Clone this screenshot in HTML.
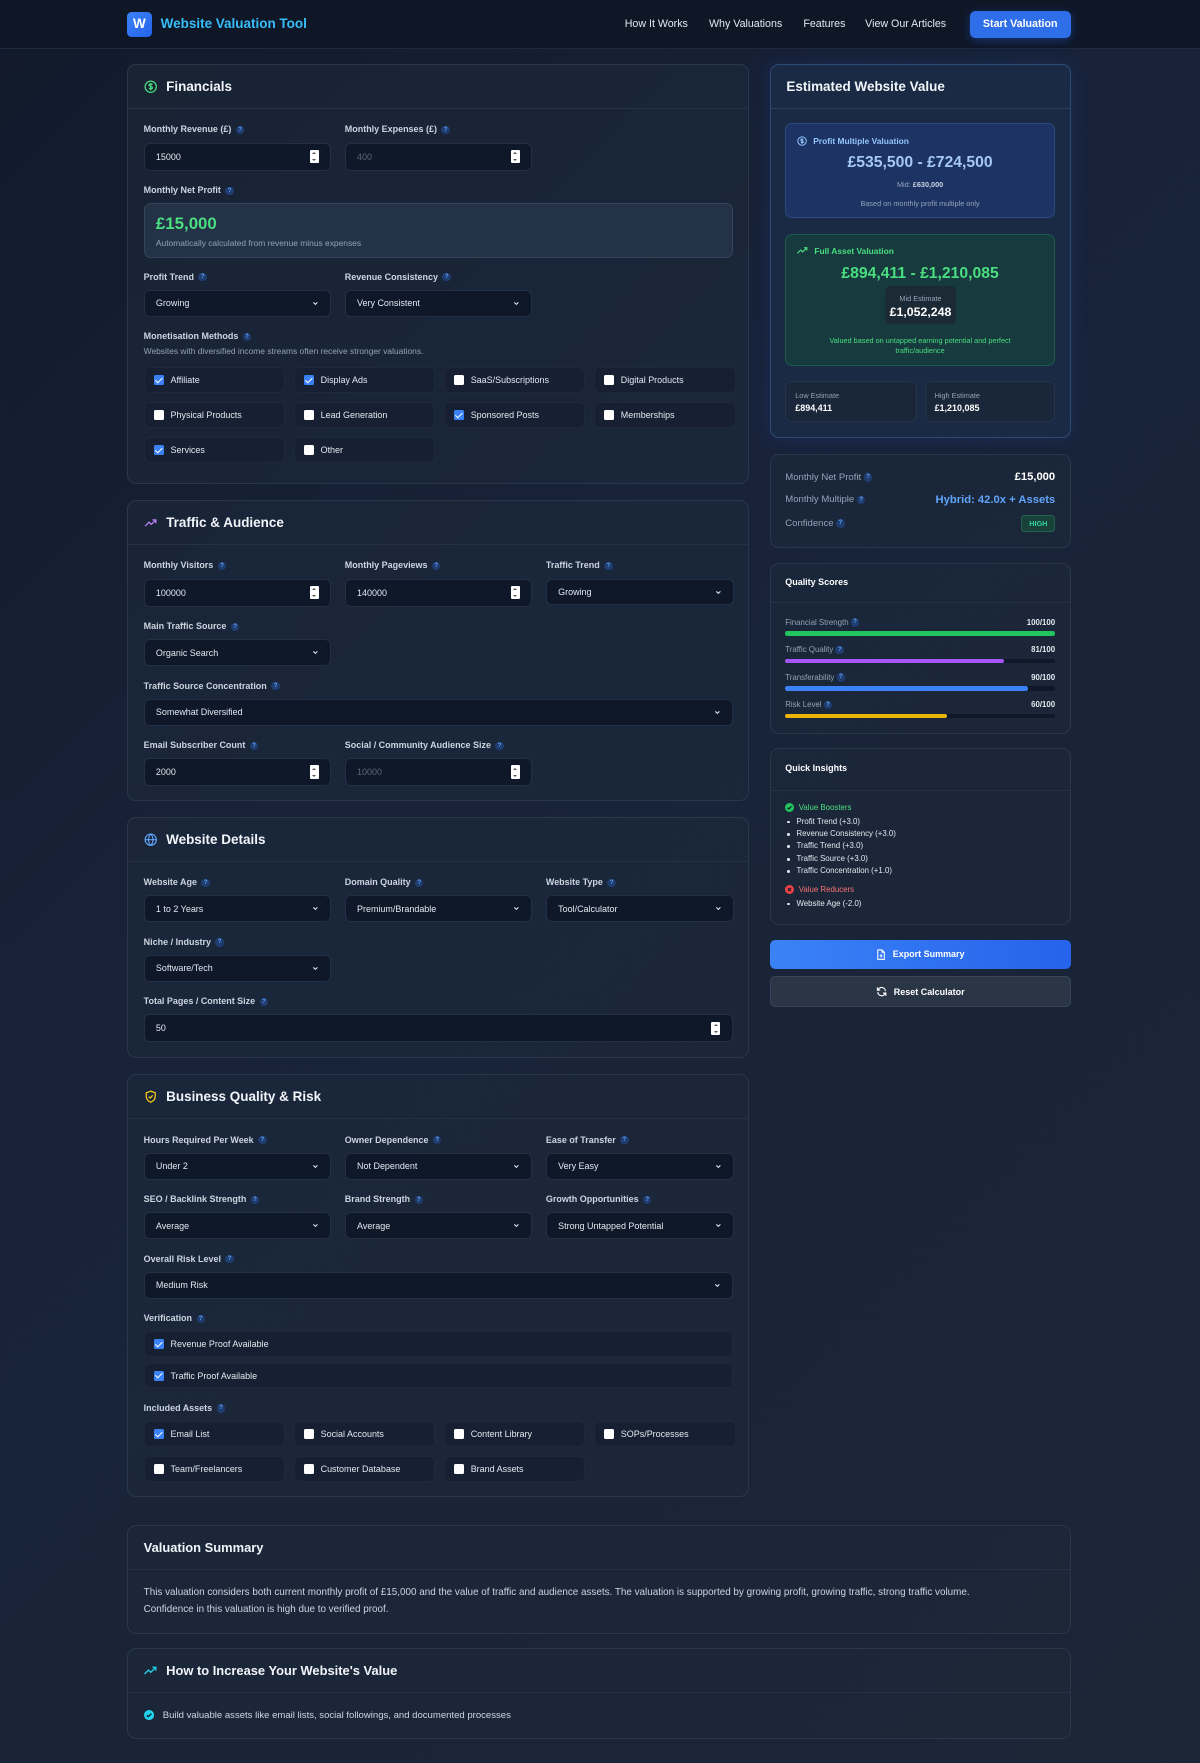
<!DOCTYPE html>
<html><head><meta charset="utf-8">
<style>
*{box-sizing:border-box;margin:0;padding:0}
html,body{width:1200px;height:1763px;overflow:hidden}
body{background:linear-gradient(135deg,#111a2b 0%,#18233a 40%,#1b2637 100%);font-family:"Liberation Sans",sans-serif;color:#e2e8f0}
#z{zoom:1.12360;width:1068px;height:1570px;position:relative}
.hdr{height:44px;background:#0f1727;border-bottom:1px solid #1f2a3c;position:relative}
.logo{position:absolute;left:113px;top:11px;width:22px;height:22px;border-radius:4px;background:linear-gradient(135deg,#3b82f6,#2563eb);color:#fff;font-weight:bold;font-size:12px;text-align:center;line-height:22px}
.brand{position:absolute;left:143px;top:14px;font-size:12px;font-weight:bold;color:#38bdf8}
.nav{position:absolute;top:16px;font-size:9.5px;color:#e2e8f0}
.sbtn{position:absolute;left:863px;top:10px;width:90px;height:24px;border-radius:5px;background:#2e6ee8;color:#fff;font-size:9.5px;font-weight:bold;text-align:center;line-height:24px;box-shadow:0 2px 8px rgba(37,99,235,.4)}
.card{position:absolute;background:rgba(30,41,59,.55);border:1px solid #2a374b;border-radius:8px}
.ch{height:39px;display:flex;align-items:center;padding:0 14px;border-bottom:1px solid #253246;font-size:12px;font-weight:bold;color:#f1f5f9;gap:8px}
.cb{padding:13px 14px}
.lbl{height:17px;line-height:12px;font-size:8px;font-weight:bold;color:#cbd5e1;display:flex;align-items:flex-start;gap:4px}
.lbl .q{margin-top:2.2px}
.q{display:inline-block;width:7.5px;height:7.5px;border-radius:50%;background:#1f3d70;color:#60a5fa;font-size:5.5px;line-height:7.5px;text-align:center;font-weight:bold;vertical-align:middle}
.inp{height:25px;background:#0f1829;border:1px solid #223046;border-radius:5px;font-size:8px;color:#e2e8f0;display:flex;align-items:center;justify-content:space-between;padding:0 10px}
.inp.ph{color:#5b6577}
.sp{width:8px;height:12px;background:#fff;border-radius:1px;position:relative}
.sp:before,.sp:after{content:"";position:absolute;left:2px;border-left:2px solid transparent;border-right:2px solid transparent}
.sp:before{top:2px;border-bottom:2.5px solid #555}
.sp:after{bottom:2px;border-top:2.5px solid #555}
.sel{height:24px}
.chev{width:6px;height:6px}
.row{margin-bottom:12px}
.g3{display:grid;grid-template-columns:167px 167px 167px;column-gap:12px}
.g4{display:grid;grid-template-columns:repeat(4,126px);column-gap:7.6px;row-gap:8px}
.ck{height:23px;background:#162032;border:1px solid #1e2a3c;border-radius:5px;display:flex;align-items:center;padding-left:8px;font-size:8px;color:#e2e8f0;gap:6px}
.bx{width:9px;height:9px;background:#fff;border-radius:1.5px;position:relative;flex:none}
.bx.on{background:#3b82f6}
.bx.on:after{content:"";position:absolute;left:2.8px;top:.8px;width:2.5px;height:5px;border:solid #fff;border-width:0 1.4px 1.4px 0;transform:rotate(45deg)}
.rb{position:absolute;border-radius:6px}
.c{text-align:center}
.bar{height:4px;background:#0f1829;border-radius:2px;margin-top:3px;margin-bottom:7.5px}
.bar i{display:block;height:4px;border-radius:2px}
.ql{display:flex;justify-content:space-between;font-size:7px;color:#94a3b8;height:10px;align-items:center}
.ql b{color:#e2e8f0;font-size:7px}
ul{list-style:none}
li{font-size:7px;color:#e2e8f0;height:11px;line-height:11px;padding-left:10px;position:relative}
li:before{content:"";position:absolute;left:2px;top:4.5px;width:2.5px;height:2.5px;border-radius:50%;background:#e2e8f0}
</style></head><body><div id="z">

<div class="hdr">
<div class="logo">W</div><div class="brand">Website Valuation Tool</div>
<div class="nav" style="left:556px">How It Works</div>
<div class="nav" style="left:631px">Why Valuations</div>
<div class="nav" style="left:715px">Features</div>
<div class="nav" style="left:770px">View Our Articles</div>
<div class="sbtn">Start Valuation</div>
</div>

<!-- FINANCIALS -->
<div class="card" style="left:113px;top:57px;width:554px;height:374px">
<div class="ch"><svg width="12" height="12" viewBox="0 0 24 24" fill="none" stroke="#4ade80" stroke-width="2.2"><circle cx="12" cy="12" r="10"/><path d="M15 8.5c-.5-1-1.6-1.5-3-1.5-1.8 0-3 .9-3 2.2 0 3 6 1.5 6 4.6 0 1.3-1.3 2.2-3 2.2-1.5 0-2.6-.6-3.1-1.6M12 5.5v13"/></svg>Financials</div>
<div class="cb">
<div class="g3 row">
<div><div class="lbl">Monthly Revenue (£) <span class="q">?</span></div><div class="inp">15000<span class="sp"></span></div></div>
<div><div class="lbl">Monthly Expenses (£) <span class="q">?</span></div><div class="inp ph">400<span class="sp"></span></div></div>
</div>
<div class="lbl">Monthly Net Profit <span class="q">?</span></div>
<div style="height:49px;background:#243247;border:1px solid #34445c;border-radius:6px;padding:9px 10px;margin-bottom:11px">
<div style="font-size:15px;font-weight:bold;color:#4ade80;line-height:18px">£15,000</div>
<div style="font-size:7.5px;color:#94a3b8;margin-top:3px">Automatically calculated from revenue minus expenses</div></div>
<div class="g3 row">
<div><div class="lbl">Profit Trend <span class="q">?</span></div><div class="inp sel">Growing<svg class="chev" viewBox="0 0 10 10"><path d="M2 3.5l3 3 3-3" stroke="#e2e8f0" stroke-width="1.6" fill="none"/></svg></div></div>
<div><div class="lbl">Revenue Consistency <span class="q">?</span></div><div class="inp sel">Very Consistent<svg class="chev" viewBox="0 0 10 10"><path d="M2 3.5l3 3 3-3" stroke="#e2e8f0" stroke-width="1.6" fill="none"/></svg></div></div>
</div>
<div class="lbl" style="height:14px">Monetisation Methods <span class="q">?</span></div>
<div style="font-size:7.5px;color:#94a3b8;height:19px">Websites with diversified income streams often receive stronger valuations.</div>
<div class="g4">
<div class="ck"><span class="bx on"></span>Affiliate</div><div class="ck"><span class="bx on"></span>Display Ads</div><div class="ck"><span class="bx"></span>SaaS/Subscriptions</div><div class="ck"><span class="bx"></span>Digital Products</div>
<div class="ck"><span class="bx"></span>Physical Products</div><div class="ck"><span class="bx"></span>Lead Generation</div><div class="ck"><span class="bx on"></span>Sponsored Posts</div><div class="ck"><span class="bx"></span>Memberships</div>
<div class="ck"><span class="bx on"></span>Services</div><div class="ck"><span class="bx"></span>Other</div>
</div>
</div></div>

<!-- TRAFFIC -->
<div class="card" style="left:113px;top:445px;width:554px;height:268px">
<div class="ch"><svg width="12" height="12" viewBox="0 0 24 24" fill="none" stroke="#c084fc" stroke-width="2.2"><path d="M2 18l7-7 4 4 8-8M15 7h6v6"/></svg>Traffic &amp; Audience</div>
<div class="cb">
<div class="g3 row">
<div><div class="lbl">Monthly Visitors <span class="q">?</span></div><div class="inp">100000<span class="sp"></span></div></div>
<div><div class="lbl">Monthly Pageviews <span class="q">?</span></div><div class="inp">140000<span class="sp"></span></div></div>
<div><div class="lbl">Traffic Trend <span class="q">?</span></div><div class="inp sel">Growing<svg class="chev" viewBox="0 0 10 10"><path d="M2 3.5l3 3 3-3" stroke="#e2e8f0" stroke-width="1.6" fill="none"/></svg></div></div>
</div>
<div class="g3 row">
<div><div class="lbl">Main Traffic Source <span class="q">?</span></div><div class="inp sel">Organic Search<svg class="chev" viewBox="0 0 10 10"><path d="M2 3.5l3 3 3-3" stroke="#e2e8f0" stroke-width="1.6" fill="none"/></svg></div></div>
</div>
<div class="row"><div class="lbl">Traffic Source Concentration <span class="q">?</span></div><div class="inp sel">Somewhat Diversified<svg class="chev" viewBox="0 0 10 10"><path d="M2 3.5l3 3 3-3" stroke="#e2e8f0" stroke-width="1.6" fill="none"/></svg></div></div>
<div class="g3">
<div><div class="lbl">Email Subscriber Count <span class="q">?</span></div><div class="inp">2000<span class="sp"></span></div></div>
<div><div class="lbl">Social / Community Audience Size <span class="q">?</span></div><div class="inp ph">10000<span class="sp"></span></div></div>
</div>
</div></div>

<!-- DETAILS -->
<div class="card" style="left:113px;top:727px;width:554px;height:215px">
<div class="ch"><svg width="12" height="12" viewBox="0 0 24 24" fill="none" stroke="#60a5fa" stroke-width="2"><circle cx="12" cy="12" r="10"/><path d="M2 12h20M12 2c3 3 4 6.5 4 10s-1 7-4 10c-3-3-4-6.5-4-10s1-7 4-10z"/></svg>Website Details</div>
<div class="cb">
<div class="g3 row">
<div><div class="lbl">Website Age <span class="q">?</span></div><div class="inp sel">1 to 2 Years<svg class="chev" viewBox="0 0 10 10"><path d="M2 3.5l3 3 3-3" stroke="#e2e8f0" stroke-width="1.6" fill="none"/></svg></div></div>
<div><div class="lbl">Domain Quality <span class="q">?</span></div><div class="inp sel">Premium/Brandable<svg class="chev" viewBox="0 0 10 10"><path d="M2 3.5l3 3 3-3" stroke="#e2e8f0" stroke-width="1.6" fill="none"/></svg></div></div>
<div><div class="lbl">Website Type <span class="q">?</span></div><div class="inp sel">Tool/Calculator<svg class="chev" viewBox="0 0 10 10"><path d="M2 3.5l3 3 3-3" stroke="#e2e8f0" stroke-width="1.6" fill="none"/></svg></div></div>
</div>
<div class="g3 row">
<div><div class="lbl">Niche / Industry <span class="q">?</span></div><div class="inp sel">Software/Tech<svg class="chev" viewBox="0 0 10 10"><path d="M2 3.5l3 3 3-3" stroke="#e2e8f0" stroke-width="1.6" fill="none"/></svg></div></div>
</div>
<div><div class="lbl">Total Pages / Content Size <span class="q">?</span></div><div class="inp">50<span class="sp"></span></div></div>
</div></div>

<!-- BUSINESS -->
<div class="card" style="left:113px;top:956px;width:554px;height:376px">
<div class="ch"><svg width="12" height="12" viewBox="0 0 24 24" fill="none" stroke="#facc15" stroke-width="2.2"><path d="M12 2l8 3v6c0 5-3.5 9-8 11-4.5-2-8-6-8-11V5z"/><path d="M8.5 12l2.5 2.5 4.5-5"/></svg>Business Quality &amp; Risk</div>
<div class="cb">
<div class="g3 row">
<div><div class="lbl">Hours Required Per Week <span class="q">?</span></div><div class="inp sel">Under 2<svg class="chev" viewBox="0 0 10 10"><path d="M2 3.5l3 3 3-3" stroke="#e2e8f0" stroke-width="1.6" fill="none"/></svg></div></div>
<div><div class="lbl">Owner Dependence <span class="q">?</span></div><div class="inp sel">Not Dependent<svg class="chev" viewBox="0 0 10 10"><path d="M2 3.5l3 3 3-3" stroke="#e2e8f0" stroke-width="1.6" fill="none"/></svg></div></div>
<div><div class="lbl">Ease of Transfer <span class="q">?</span></div><div class="inp sel">Very Easy<svg class="chev" viewBox="0 0 10 10"><path d="M2 3.5l3 3 3-3" stroke="#e2e8f0" stroke-width="1.6" fill="none"/></svg></div></div>
</div>
<div class="g3 row">
<div><div class="lbl">SEO / Backlink Strength <span class="q">?</span></div><div class="inp sel">Average<svg class="chev" viewBox="0 0 10 10"><path d="M2 3.5l3 3 3-3" stroke="#e2e8f0" stroke-width="1.6" fill="none"/></svg></div></div>
<div><div class="lbl">Brand Strength <span class="q">?</span></div><div class="inp sel">Average<svg class="chev" viewBox="0 0 10 10"><path d="M2 3.5l3 3 3-3" stroke="#e2e8f0" stroke-width="1.6" fill="none"/></svg></div></div>
<div><div class="lbl">Growth Opportunities <span class="q">?</span></div><div class="inp sel">Strong Untapped Potential<svg class="chev" viewBox="0 0 10 10"><path d="M2 3.5l3 3 3-3" stroke="#e2e8f0" stroke-width="1.6" fill="none"/></svg></div></div>
</div>
<div class="row"><div class="lbl">Overall Risk Level <span class="q">?</span></div><div class="inp sel">Medium Risk<svg class="chev" viewBox="0 0 10 10"><path d="M2 3.5l3 3 3-3" stroke="#e2e8f0" stroke-width="1.6" fill="none"/></svg></div></div>
<div class="lbl">Verification <span class="q">?</span></div>
<div class="ck" style="margin-bottom:5px"><span class="bx on"></span>Revenue Proof Available</div>
<div class="ck" style="margin-bottom:12px"><span class="bx on"></span>Traffic Proof Available</div>
<div class="lbl">Included Assets <span class="q">?</span></div>
<div class="g4">
<div class="ck"><span class="bx on"></span>Email List</div><div class="ck"><span class="bx"></span>Social Accounts</div><div class="ck"><span class="bx"></span>Content Library</div><div class="ck"><span class="bx"></span>SOPs/Processes</div>
<div class="ck"><span class="bx"></span>Team/Freelancers</div><div class="ck"><span class="bx"></span>Customer Database</div><div class="ck"><span class="bx"></span>Brand Assets</div>
</div>
</div></div>

<!-- RIGHT: ESTIMATE -->
<div class="card" style="left:685px;top:57px;width:268px;height:333px;background:#1a2a44;border-color:#2c4a78;box-shadow:0 0 16px rgba(37,99,235,.15)">
<div class="ch" style="border-color:#2a3f60">Estimated Website Value</div>
<div class="rb" style="left:13px;top:52px;width:240px;height:84px;background:#1d3363;border:1px solid #2b4a80">
<div style="position:absolute;left:10px;top:10px;font-size:7.5px;font-weight:bold;color:#93c5fd;display:flex;align-items:center;gap:5px"><svg width="9" height="9" viewBox="0 0 24 24" fill="none" stroke="#93c5fd" stroke-width="2.4"><circle cx="12" cy="12" r="10"/><path d="M15 8.5c-.5-1-1.6-1.5-3-1.5-1.8 0-3 .9-3 2.2 0 3 6 1.5 6 4.6 0 1.3-1.3 2.2-3 2.2-1.5 0-2.6-.6-3.1-1.6M12 5.5v13"/></svg>Profit Multiple Valuation</div>
<div class="c" style="position:absolute;left:0;right:0;top:26px;font-size:14px;font-weight:bold;color:#a5c8f5">£535,500 - £724,500</div>
<div class="c" style="position:absolute;left:0;right:0;top:49px;font-size:6.5px;color:#94a3b8">Mid: <b style="color:#cbd5e1">£630,000</b></div>
<div class="c" style="position:absolute;left:0;right:0;top:66px;font-size:6.5px;color:#94a3b8">Based on monthly profit multiple only</div>
</div>
<div class="rb" style="left:13px;top:150px;width:240px;height:118px;background:#163a3e;border:1px solid #1f5a48">
<div style="position:absolute;left:10px;top:10px;font-size:7.5px;font-weight:bold;color:#4ade80;display:flex;align-items:center;gap:5px"><svg width="10" height="8" viewBox="0 0 24 18" fill="none" stroke="#4ade80" stroke-width="2.4"><path d="M1 15l7-7 4 4 9-9M15 3h6v6"/></svg>Full Asset Valuation</div>
<div class="c" style="position:absolute;left:0;right:0;top:27px;font-size:14px;font-weight:bold;color:#4ade80">£894,411 - £1,210,085</div>
<div class="c" style="position:absolute;left:88px;top:46px;width:63px;height:34px;background:#1b2a35;border-radius:4px">
<div style="font-size:6.5px;color:#94a3b8;margin-top:7px">Mid Estimate</div>
<div style="font-size:11px;font-weight:bold;color:#fff;margin-top:2px">£1,052,248</div></div>
<div class="c" style="position:absolute;left:0;right:0;top:90px;font-size:6.5px;color:#4ade80;line-height:9.5px">Valued based on untapped earning potential and perfect<br>traffic/audience</div>
</div>
<div class="rb" style="left:13px;top:281px;width:117px;height:37px;background:#1a2639;border:1px solid #26344a">
<div style="position:absolute;left:8px;top:8px;font-size:6.5px;color:#94a3b8">Low Estimate</div>
<div style="position:absolute;left:8px;top:19px;font-size:8px;font-weight:bold;color:#fff">£894,411</div></div>
<div class="rb" style="left:137px;top:281px;width:116px;height:37px;background:#1a2639;border:1px solid #26344a">
<div style="position:absolute;left:8px;top:8px;font-size:6.5px;color:#94a3b8">High Estimate</div>
<div style="position:absolute;left:8px;top:19px;font-size:8px;font-weight:bold;color:#fff">£1,210,085</div></div>
</div>

<!-- STATS -->
<div class="card" style="left:685px;top:404px;width:268px;height:84px;padding:0 13px">
<div style="display:flex;justify-content:space-between;align-items:center;height:20px;margin-top:10px;font-size:8.5px;color:#94a3b8"><span>Monthly Net Profit <span class="q">?</span></span><b style="color:#fff;font-size:10px">£15,000</b></div>
<div style="display:flex;justify-content:space-between;align-items:center;height:20px;font-size:8.5px;color:#94a3b8"><span>Monthly Multiple <span class="q">?</span></span><b style="color:#60a5fa;font-size:10px">Hybrid: 42.0x + Assets</b></div>
<div style="display:flex;justify-content:space-between;align-items:center;height:22px;font-size:8.5px;color:#94a3b8"><span>Confidence <span class="q">?</span></span><b style="color:#34d399;font-size:6.5px;background:#184239;border:1px solid #22614c;border-radius:3px;padding:3px 6px">HIGH</b></div>
</div>

<!-- QUALITY -->
<div class="card" style="left:685px;top:501px;width:268px;height:152px">
<div style="height:35px;border-bottom:1px solid #253246;padding:12px 13px 0;font-size:8px;font-weight:bold;color:#fff">Quality Scores</div>
<div style="padding:12px 13px 0">
<div class="ql"><span>Financial Strength <span class="q">?</span></span><b>100/100</b></div><div class="bar"><i style="width:100%;background:#22c55e"></i></div>
<div class="ql"><span>Traffic Quality <span class="q">?</span></span><b>81/100</b></div><div class="bar"><i style="width:81%;background:#a855f7"></i></div>
<div class="ql"><span>Transferability <span class="q">?</span></span><b>90/100</b></div><div class="bar"><i style="width:90%;background:#3b82f6"></i></div>
<div class="ql"><span>Risk Level <span class="q">?</span></span><b>60/100</b></div><div class="bar"><i style="width:60%;background:#eab308"></i></div>
</div></div>

<!-- INSIGHTS -->
<div class="card" style="left:685px;top:666px;width:268px;height:157px">
<div style="height:37px;border-bottom:1px solid #253246;padding:12px 13px 0;font-size:8px;font-weight:bold;color:#fff">Quick Insights</div>
<div style="padding:9px 13px 0">
<div style="font-size:7px;color:#4ade80;display:flex;align-items:center;gap:4px;height:11px"><svg width="8" height="8" viewBox="0 0 10 10"><circle cx="5" cy="5" r="5" fill="#22c55e"/><path d="M2.8 5.2l1.5 1.4 3-3" stroke="#0f1829" stroke-width="1.3" fill="none"/></svg>Value Boosters</div>
<ul style="margin-top:2px"><li>Profit Trend (+3.0)</li><li>Revenue Consistency (+3.0)</li><li>Traffic Trend (+3.0)</li><li>Traffic Source (+3.0)</li><li>Traffic Concentration (+1.0)</li></ul>
<div style="font-size:7px;color:#f87171;display:flex;align-items:center;gap:4px;height:11px;margin-top:5px"><svg width="8" height="8" viewBox="0 0 10 10"><circle cx="5" cy="5" r="5" fill="#ef4444"/><path d="M3.3 3.3l3.4 3.4M6.7 3.3l-3.4 3.4" stroke="#0f1829" stroke-width="1.3"/></svg>Value Reducers</div>
<ul style="margin-top:2px"><li>Website Age (-2.0)</li></ul>
</div></div>

<div style="position:absolute;left:685px;top:837px;width:268px;height:25px;border-radius:5px;background:linear-gradient(90deg,#3b82f6,#2563eb);display:flex;align-items:center;justify-content:center;gap:6px;font-size:8px;font-weight:bold;color:#fff"><svg width="9" height="10" viewBox="0 0 20 24" fill="none" stroke="#fff" stroke-width="2.2"><path d="M3 2h9l5 5v15H3z M12 2v5h5 M10 11v7 M7 15h6"/></svg>Export Summary</div>
<div style="position:absolute;left:685px;top:869px;width:268px;height:27px;border-radius:5px;background:#2a3545;border:1px solid #36445a;display:flex;align-items:center;justify-content:center;gap:6px;font-size:8px;font-weight:bold;color:#fff"><svg width="10" height="10" viewBox="0 0 24 24" fill="none" stroke="#fff" stroke-width="2.4"><path d="M20 11a8 8 0 0 0-14.5-4.5L3 9M3 3v6h6M4 13a8 8 0 0 0 14.5 4.5L21 15M21 21v-6h-6"/></svg>Reset Calculator</div>

<!-- SUMMARY -->
<div class="card" style="left:113px;top:1357px;width:840px;height:97px">
<div class="ch" style="font-size:11.5px">Valuation Summary</div>
<div style="padding:14px 14px;font-size:8.8px;line-height:15px;color:#cbd5e1;white-space:nowrap">This valuation considers both current monthly profit of £15,000 and the value of traffic and audience assets. The valuation is supported by growing profit, growing traffic, strong traffic volume.<br>Confidence in this valuation is high due to verified proof.</div>
</div>
<div class="card" style="left:113px;top:1467px;width:840px;height:81px">
<div class="ch" style="font-size:11.5px"><svg width="12" height="10" viewBox="0 0 24 18" fill="none" stroke="#22d3ee" stroke-width="2.4"><path d="M1 15l7-7 4 4 9-9M15 3h6v6"/></svg>How to Increase Your Website's Value</div>
<div style="padding:15px 14px;font-size:8.5px;color:#cbd5e1;display:flex;align-items:center;gap:8px"><svg width="9" height="9" viewBox="0 0 10 10"><circle cx="5" cy="5" r="5" fill="#22d3ee"/><path d="M2.8 5.2l1.5 1.4 3-3" stroke="#0f1829" stroke-width="1.3" fill="none"/></svg>Build valuable assets like email lists, social followings, and documented processes</div>
</div>

</div></body></html>
